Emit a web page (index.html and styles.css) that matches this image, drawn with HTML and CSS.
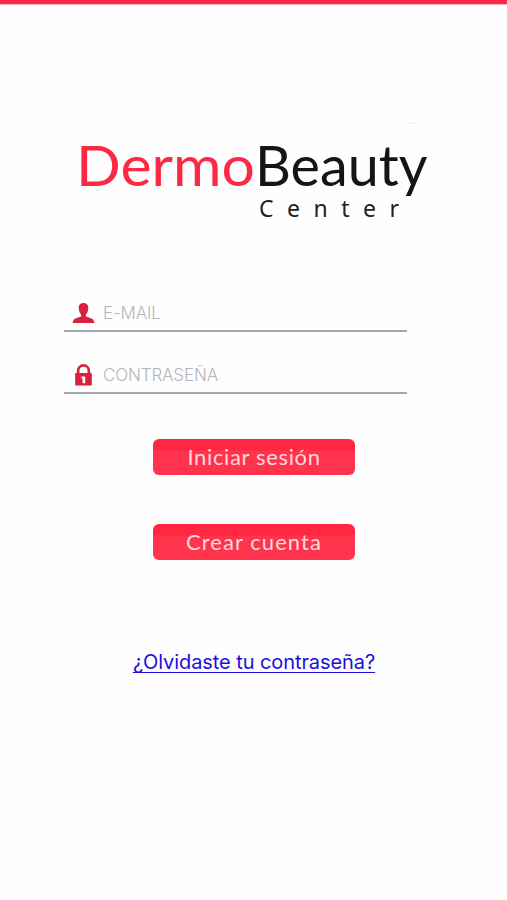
FILE: index.html
```html
<!DOCTYPE html>
<html lang="es">
<head>
<meta charset="utf-8">
<title>DermoBeauty Center</title>
<link rel="stylesheet" href="styles.css">
</head>
<body>
<main class="screen">
  <svg class="logo" viewBox="0 0 360 112" role="img" aria-label="DermoBeauty Center">
    <text class="logo-dermo" x="2" y="72" textLength="179" lengthAdjust="spacingAndGlyphs">Dermo</text>
    <text class="logo-beauty" x="181" y="72" textLength="172.500" lengthAdjust="spacingAndGlyphs">Beauty</text>
    <text class="logo-center" x="185" y="103" textLength="140">Center</text>
    <path class="logo-mark" d="M332 9q5 1 10 0"/>
  </svg>
  <form class="login">
    <label class="field">
      <svg class="icon" viewBox="0 0 24 24"><path d="M12 1.500c-3.500 0-5 2.300-5 5.200 0 1 .1 1.700.4 2.600.4 2.400 1.500 3.500 2.200 4.500v1.500c-1.500 1.200-4.800 1.500-7 3-.9.7-1.500 2-1.900 4.200h22.600c-.4-2.200-1-3.500-1.900-4.200-2.200-1.500-5.500-1.800-7-3v-1.500c.7-1 1.800-2.100 2.200-4.500.3-.9.4-1.600.4-2.600 0-2.900-1.500-5.200-5-5.200z"/></svg>
      <input class="input email" type="text" placeholder="E-MAIL">
    </label>
    <label class="field">
      <svg class="icon" viewBox="0 0 24 24"><path fill-rule="evenodd" d="M5 10V7.500a7 7 0 0 1 14 0V10h.7q1 0 1 1v11q0 1-1 1H4.300q-1 0-1-1V11q0-1 1-1zM7.800 10h8.400V7.500a4.200 4.200 0 0 0-8.400 0zM9.800 13.500v2.200h1.200v4.800h2.800v-7z"/></svg>
      <input class="input password" type="password" placeholder="CONTRASEÑA">
    </label>
    <button class="button sign-in" type="button">Iniciar sesión</button>
    <button class="button create" type="button">Crear cuenta</button>
  </form>
  <a class="forgot" href="#">¿Olvidaste tu contraseña?</a>
</main>
</body>
</html>
```
FILE: styles.css
```css
* { box-sizing: border-box; }
body { margin: 0; background: #fefefe; }
.screen {
  min-height: 900px;
  border-top: 4px solid #ff2846;
  box-shadow: inset 0 1px #ffb3bf;
  display: flex;
  flex-direction: column;
  align-items: center;
}
.logo { width: 360px; height: 112px; margin-top: 110px; margin-left: 1px; }
.logo text { font-family: Lato, sans-serif; }
.logo-dermo { font-size: 56px; fill: #fb2943; }
.logo-beauty { font-size: 56px; fill: #151515; }
.logo .logo-center { font-family: "Noto Sans", sans-serif; font-size: 23px; fill: #222; }
.logo-mark { fill: none; stroke: #f2eeee; }
.login {
  width: 343px;
  margin: 66px 36px 0 0;
  display: flex;
  flex-direction: column;
}
.field {
  height: 40px;
  margin-bottom: 21.500px;
  padding: 4px 0 0 8px;
  border-bottom: 2px solid #a5a5a5;
  display: flex;
  align-items: center;
}
.icon { width: 23px; height: 24px; fill: #d9213d; }
.input {
  width: 290px;
  margin-left: 8px;
  padding: 0;
  border: 0;
  outline: 0;
  background: none;
  font: 300 17px Inter, sans-serif;
  letter-spacing: -.15px;
}
.input::placeholder { color: #b5b5b9; opacity: 1; }
.button {
  width: 202px;
  height: 36px;
  margin-left: 89px;
  padding: 0 0 2px;
  border: 0;
  border-radius: 6px;
  background: linear-gradient(#ff2742 0 30%, #ff334c 34%);
  color: #ffd7dc;
  font: 400 22px Lato, sans-serif;
  letter-spacing: .65px;
}
.sign-in { margin-top: 24px; }
.create { margin-top: 49px; letter-spacing: 1.050px; }
.forgot {
  margin: 89px 0 0 1px;
  color: #1b0fd8;
  font: 400 20px/26px Inter, sans-serif;
  letter-spacing: -.08px;
  text-decoration-thickness: 1px;
  text-decoration-skip-ink: none;
  text-underline-offset: 3px;
}
```
